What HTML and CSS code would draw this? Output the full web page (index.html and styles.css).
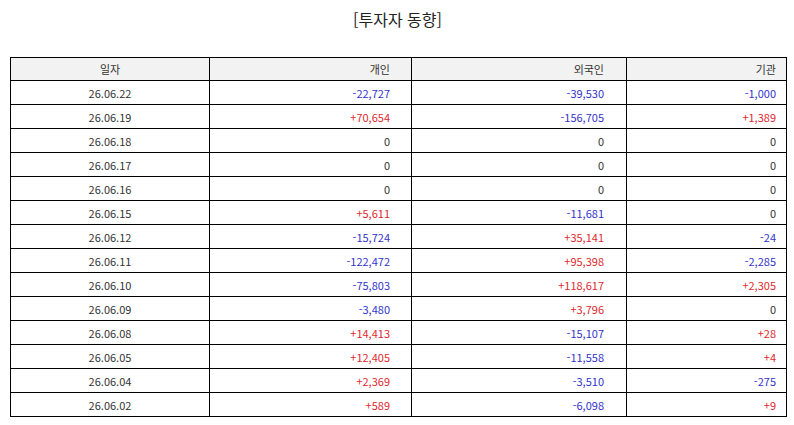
FILE: index.html
```html
<!DOCTYPE html>
<html lang="ko">
<head>
<meta charset="utf-8">
<link rel="stylesheet" href="styles.css">
</head>
<body>
<div class="page">
  <h1 class="title">[투자자 동향]</h1>
  <table class="grid">
    <colgroup>
      <col class="c1"><col class="c2"><col class="c3"><col class="c4">
    </colgroup>
    <thead>
      <tr><th class="date">일자</th><th class="num n2">개인</th><th class="num n3">외국인</th><th class="num n4">기관</th></tr>
    </thead>
    <tbody>
      <tr><td class="date">26.06.22</td><td class="num n2 dn">-22,727</td><td class="num n3 dn">-39,530</td><td class="num n4 dn">-1,000</td></tr>
      <tr><td class="date">26.06.19</td><td class="num n2 up">+70,654</td><td class="num n3 dn">-156,705</td><td class="num n4 up">+1,389</td></tr>
      <tr><td class="date">26.06.18</td><td class="num n2">0</td><td class="num n3">0</td><td class="num n4">0</td></tr>
      <tr><td class="date">26.06.17</td><td class="num n2">0</td><td class="num n3">0</td><td class="num n4">0</td></tr>
      <tr><td class="date">26.06.16</td><td class="num n2">0</td><td class="num n3">0</td><td class="num n4">0</td></tr>
      <tr><td class="date">26.06.15</td><td class="num n2 up">+5,611</td><td class="num n3 dn">-11,681</td><td class="num n4">0</td></tr>
      <tr><td class="date">26.06.12</td><td class="num n2 dn">-15,724</td><td class="num n3 up">+35,141</td><td class="num n4 dn">-24</td></tr>
      <tr><td class="date">26.06.11</td><td class="num n2 dn">-122,472</td><td class="num n3 up">+95,398</td><td class="num n4 dn">-2,285</td></tr>
      <tr><td class="date">26.06.10</td><td class="num n2 dn">-75,803</td><td class="num n3 up">+118,617</td><td class="num n4 up">+2,305</td></tr>
      <tr><td class="date">26.06.09</td><td class="num n2 dn">-3,480</td><td class="num n3 up">+3,796</td><td class="num n4">0</td></tr>
      <tr><td class="date">26.06.08</td><td class="num n2 up">+14,413</td><td class="num n3 dn">-15,107</td><td class="num n4 up">+28</td></tr>
      <tr><td class="date">26.06.05</td><td class="num n2 up">+12,405</td><td class="num n3 dn">-11,558</td><td class="num n4 up">+4</td></tr>
      <tr><td class="date">26.06.04</td><td class="num n2 up">+2,369</td><td class="num n3 dn">-3,510</td><td class="num n4 dn">-275</td></tr>
      <tr><td class="date">26.06.02</td><td class="num n2 up">+589</td><td class="num n3 dn">-6,098</td><td class="num n4 up">+9</td></tr>
    </tbody>
  </table>
</div>
</body>
</html>
```

FILE: styles.css
```css
html, body {
  margin: 0;
  padding: 0;
  background: #ffffff;
}
body {
  font-family: "Noto Sans CJK KR", "Noto Sans", sans-serif;
  color: #333333;
}
.page {
  padding: 8px 9px 0 10px;
}
.title {
  margin: 0;
  height: 49px;
  font-size: 16px;
  font-weight: normal;
  line-height: 20px;
  text-align: center;
  color: #222222;
  padding-top: 1px;
  box-sizing: border-box;
}
.grid {
  width: 776px;
  border-collapse: collapse;
  table-layout: fixed;
  font-size: 11px;
}
.c1 { width: 199px; }
.c2 { width: 202px; }
.c3 { width: 215px; }
.c4 { width: 160px; }
.grid th,
.grid td {
  border: 1px solid #000000;
  padding: 0;
  height: 23px;
  line-height: 14px;
  font-weight: normal;
  vertical-align: middle;
  white-space: nowrap;
}
.grid th {
  height: 22px;
  background: #f2f2f2;
}
.date {
  text-align: center;
}
.num {
  text-align: right;
}
.n2 { padding-right: 21px !important; }
.n3 { padding-right: 22px !important; }
.n4 { padding-right: 10px !important; }
.up { color: #e0282e; }
.dn { color: #3333cc; }
```
